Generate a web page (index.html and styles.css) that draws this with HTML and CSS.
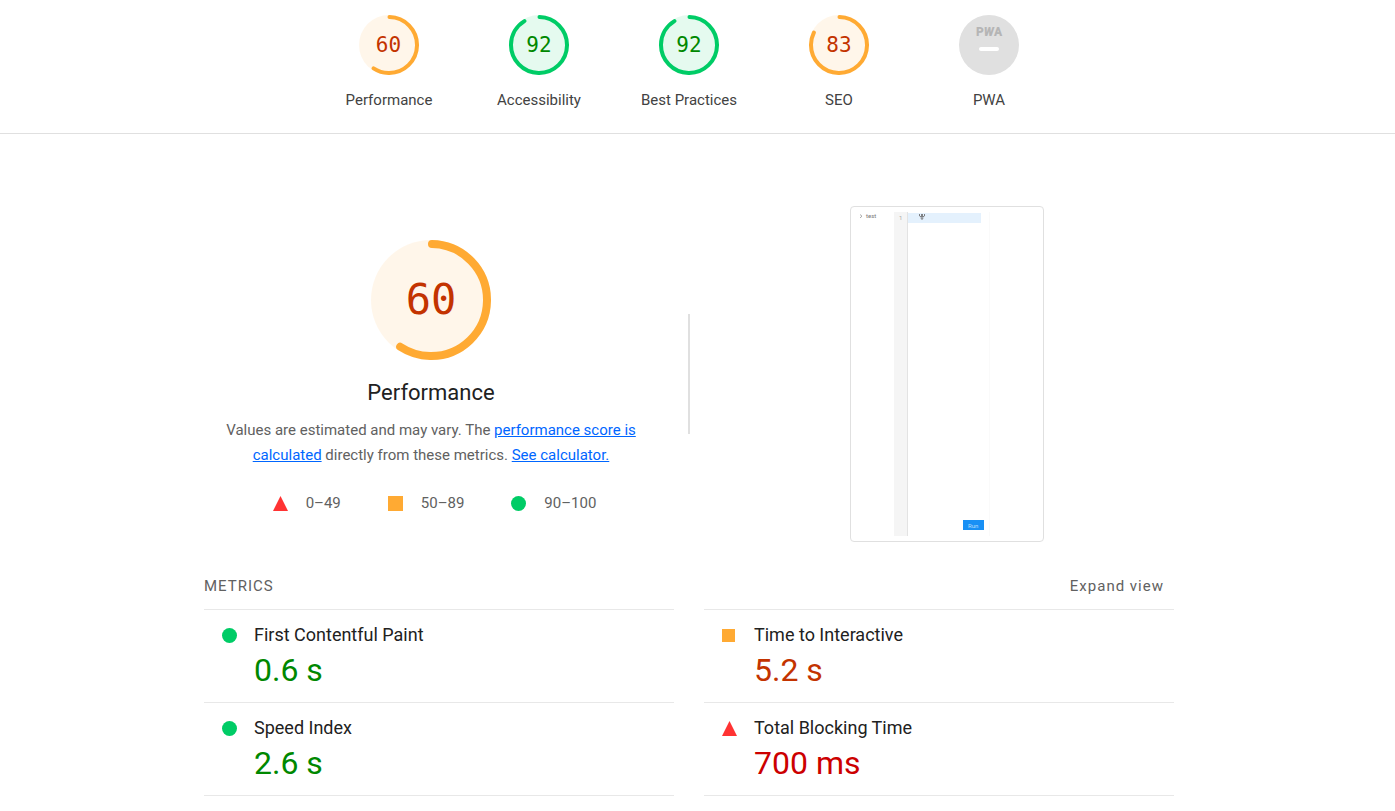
FILE: index.html
```
<!DOCTYPE html>
<html lang="en">
<head>
<meta charset="utf-8">
<meta name="viewport" content="width=device-width, initial-scale=1">
<title>Performance report</title>
<link rel="stylesheet" href="styles.css">
</head>
<body>
<header class="scores">
  <a class="score average" href="#performance">
    <svg class="gauge" viewBox="0 0 120 120" aria-hidden="true"><circle class="gauge-base" cx="60" cy="60" r="60"/><circle class="gauge-arc" cx="60" cy="60" r="56" pathLength="100" stroke-dasharray="59 100"/><text class="gauge-number" x="59" y="73">60</text></svg>
    <span class="score-label">Performance</span>
  </a>
  <a class="score pass" href="#accessibility">
    <svg class="gauge" viewBox="0 0 120 120" aria-hidden="true"><circle class="gauge-base" cx="60" cy="60" r="60"/><circle class="gauge-arc" cx="60" cy="60" r="56" pathLength="100" stroke-dasharray="91 100"/><text class="gauge-number" x="60" y="73">92</text></svg>
    <span class="score-label">Accessibility</span>
  </a>
  <a class="score pass" href="#best-practices">
    <svg class="gauge" viewBox="0 0 120 120" aria-hidden="true"><circle class="gauge-base" cx="60" cy="60" r="60"/><circle class="gauge-arc" cx="60" cy="60" r="56" pathLength="100" stroke-dasharray="91 100"/><text class="gauge-number" x="60" y="73">92</text></svg>
    <span class="score-label">Best Practices</span>
  </a>
  <a class="score average" href="#seo">
    <svg class="gauge" viewBox="0 0 120 120" aria-hidden="true"><circle class="gauge-base" cx="60" cy="60" r="60"/><circle class="gauge-arc" cx="60" cy="60" r="56" pathLength="100" stroke-dasharray="82 100"/><text class="gauge-number" x="60" y="73">83</text></svg>
    <span class="score-label">SEO</span>
  </a>
  <a class="score" href="#pwa">
    <svg class="gauge" viewBox="0 0 60 60" aria-hidden="true"><circle cx="30" cy="30" r="30" fill="#e0e0e0"/><text class="pwa-mark" x="30" y="21">P<tspan class="slant">W</tspan>A</text><rect x="20" y="32" width="20" height="4" rx="2" fill="#fff"/></svg>
    <span class="score-label">PWA</span>
  </a>
</header>
<main class="report" id="performance">
  <section class="overview">
    <div class="summary average">
      <svg class="gauge gauge-large" viewBox="0 0 120 120" aria-hidden="true"><circle class="gauge-base" cx="60" cy="60" r="60"/><circle class="gauge-arc" cx="60" cy="60" r="56" pathLength="100" stroke-dasharray="59 100"/><text class="gauge-number" x="60" y="74">60</text></svg>
      <h1 class="summary-title">Performance</h1>
      <p class="summary-text">Values are estimated and may vary. The <a href="#score">performance score is calculated</a> directly from these metrics. <a href="#calculator">See calculator.</a></p>
      <ul class="scale">
        <li><svg class="mark" viewBox="0 0 15 15" aria-hidden="true"><path fill="#f33" d="M7.500 0 15 15H0z"/></svg>0–49</li>
        <li><svg class="mark" viewBox="0 0 15 15" aria-hidden="true"><path fill="#fa3" d="M0 0h15v15H0z"/></svg>50–89</li>
        <li><svg class="mark" viewBox="0 0 15 15" aria-hidden="true"><circle fill="#0c6" cx="7.500" cy="7.500" r="7.500"/></svg>90–100</li>
      </ul>
    </div>
    <div class="divider"></div>
    <div class="preview">
      <svg class="screenshot" viewBox="0 0 192 334" role="img" aria-label="Final screenshot">
        <path fill="#f5f5f5" d="M43 5h13v324H43z"/>
        <path fill="#e3e3e3" d="M56 5h1v324h-1z"/>
        <path fill="#fafafa" d="M138 5h1v324h-1z"/>
        <path fill="#e4f1fd" d="M57 6h73v10H57z"/>
        <path fill="none" stroke="#888" stroke-width=".7" d="m9 7.500 2 1.700-2 1.700"/>
        <text class="tiny" x="15" y="11">test</text>
        <text class="tiny faint" x="48" y="13">1</text>
        <path fill="none" stroke="#666" stroke-width=".8" d="M68.500 7v2l2 1V7m1 0v3l2-1V7M69.500 11h3M71 11v2"/>
        <rect x="112" y="313" width="21" height="10" fill="#1890f5"/>
        <text class="tiny light" x="117" y="321">Run</text>
      </svg>
    </div>
  </section>
  <section>
    <div class="metrics-head">
      <h2 class="metrics-title">METRICS</h2>
      <button class="expand" type="button">Expand view</button>
    </div>
    <div class="metrics">
      <div class="metric pass">
        <svg class="mark" viewBox="0 0 15 15" aria-hidden="true"><circle fill="#0c6" cx="7.500" cy="7.500" r="7.500"/></svg>
        <div><h3 class="metric-name">First Contentful Paint</h3><div class="metric-value">0.6 s</div></div>
      </div>
      <div class="metric average">
        <svg class="mark" viewBox="0 0 15 15" aria-hidden="true"><path fill="#fa3" d="M0 1h13v13H0z"/></svg>
        <div><h3 class="metric-name">Time to Interactive</h3><div class="metric-value">5.2 s</div></div>
      </div>
      <div class="metric pass">
        <svg class="mark" viewBox="0 0 15 15" aria-hidden="true"><circle fill="#0c6" cx="7.500" cy="7.500" r="7.500"/></svg>
        <div><h3 class="metric-name">Speed Index</h3><div class="metric-value">2.6 s</div></div>
      </div>
      <div class="metric fail">
        <svg class="mark" viewBox="0 0 15 15" aria-hidden="true"><path fill="#f33" d="M7.500 0 15 15H0z"/></svg>
        <div><h3 class="metric-name">Total Blocking Time</h3><div class="metric-value">700 ms</div></div>
      </div>
    </div>
  </section>
</main>
</body>
</html>
```
FILE: styles.css
```
* { box-sizing: border-box; }
body {
  margin: 0;
  background: #fff;
  color: #212121;
  font: 15px/25px Roboto, "Liberation Sans", sans-serif;
}
h1, h2, h3, p, ul { margin: 0; padding: 0; font-weight: 400; }

.pass { --tone: #0c6; --ink: #080; }
.average { --tone: #fa3; --ink: #c33300; }
.fail { --tone: #f33; --ink: #c00; }

.scores {
  display: flex;
  justify-content: center;
  padding: 15px 17px 20px 0;
  border-bottom: 1px solid #e0e0e0;
}
.score {
  display: flex;
  flex-direction: column;
  align-items: center;
  gap: 13px;
  width: 150px;
  color: #424242;
  text-decoration: none;
}
.gauge { display: block; width: 60px; height: 60px; }
.gauge-large { width: 120px; height: 120px; }
.gauge-base { fill: var(--tone); opacity: .1; }
.gauge-arc {
  fill: none;
  stroke: var(--tone);
  stroke-width: 8px;
  stroke-linecap: round;
  transform: rotate(-89deg);
  transform-origin: center;
}
.gauge-number {
  fill: var(--ink);
  font: 42px "DejaVu Sans Mono", monospace;
  text-anchor: middle;
}
.pwa-mark {
  fill: #b5b5b5;
  font: 900 12px Roboto, sans-serif;
  text-anchor: middle;
}
.slant { font-style: italic; }

.report { max-width: 987px; margin: 0 auto; padding-right: 17px; }
.overview {
  display: grid;
  grid-template-columns: 1fr 62px 1fr;
  align-items: center;
  padding: 72px 0 32px;
}
.summary {
  display: flex;
  flex-direction: column;
  align-items: center;
  padding-top: 8px;
  text-align: center;
}
.summary-title { margin-top: 17px; font-size: 22px; line-height: 32px; }
.summary-text { margin-top: 9px; padding: 0 16px; color: #616161; }
.summary-text a { color: #06f; }
.scale {
  display: flex;
  gap: 47px;
  margin-top: 23px;
  padding-left: 7px;
  color: #616161;
  list-style: none;
}
.scale li { display: flex; align-items: center; gap: 18px; }
.mark { flex: none; width: 15px; height: 15px; }
.divider { justify-self: center; width: 2px; height: 120px; background: #e0e0e0; }
.preview { justify-self: center; }
.screenshot {
  display: block;
  width: 194px;
  height: 336px;
  border: 1px solid #e0e0e0;
  border-radius: 4px;
}
.tiny { fill: #777; font: 6px Roboto, sans-serif; }
.faint { fill: #aaa; }
.light { fill: #b9dcfc; }

.metrics-head { display: flex; justify-content: space-between; padding-bottom: 10px; }
.metrics-title, .expand { color: #616161; font-size: 15px; line-height: 25px; letter-spacing: 1px; }
.expand { padding: 0 10px; border: 0; background: none; font-family: inherit; }
.metrics {
  display: grid;
  grid-template-columns: 1fr 1fr;
  column-gap: 30px;
}
.metric {
  display: flex;
  gap: 17px;
  padding: 12px 18px 8px;
  border-top: 1px solid #e8e8e8;
}
.metric:nth-last-child(-n+2) { border-bottom: 1px solid #e8e8e8; }
.metric .mark { margin-top: 6px; }
.metric-name { font-size: 18px; line-height: 25px; }
.metric-value { color: var(--ink); font-size: 32px; line-height: 47px; }
```
